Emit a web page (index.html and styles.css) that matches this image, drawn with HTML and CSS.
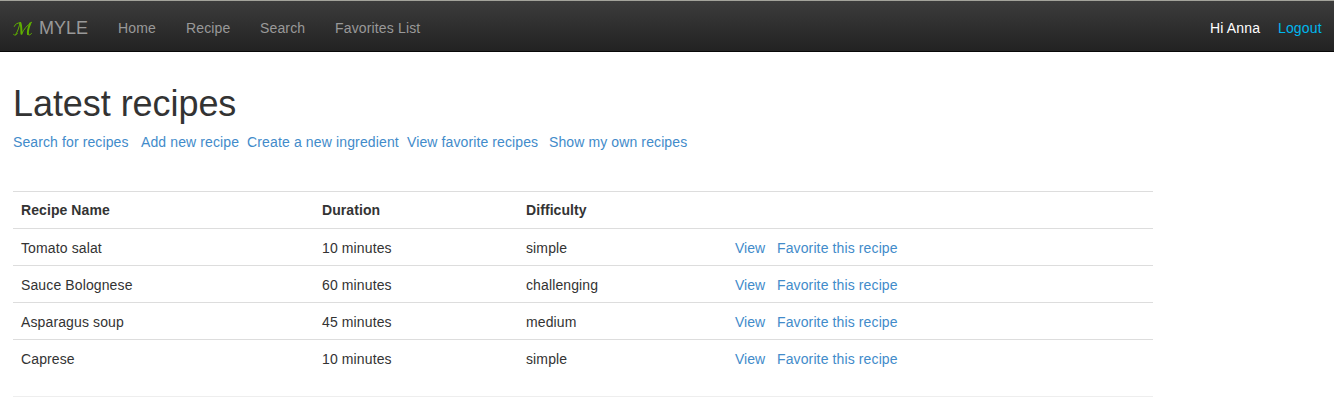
FILE: index.html
```html
<!DOCTYPE html>
<html lang="en">
<head>
<meta charset="utf-8">
<title>Latest recipes</title>
<link rel="stylesheet" href="styles.css">
</head>
<body>
<nav class="navbar">
  <a class="brand"><svg class="logo" viewBox="0 0 22 16" width="22" height="16" aria-hidden="true"><path class="hairline" d="M1.300 5.400C2 3.200 4.200 2 7 1.700M7 2C6 6 5 10 2.700 13.600M.5 13.400C1.800 14.800 3.200 14.200 4.300 12.500M8.600 12.800C11 8.200 14 4.200 18.700 1.200M15 12.800C15 15 17.200 14 18.500 12.500"/><path class="stem" d="M7.400 2C8.500 5 8.300 9 8.500 12.800M17.300 2.400C15.700 6 14.500 10 15 13"/></svg><span>MYLE</span></a>
  <a class="nav-link home">Home</a><a class="nav-link recipe">Recipe</a><a class="nav-link find">Search</a><a class="nav-link">Favorites List</a>
  <div class="user"><span class="greeting">Hi Anna</span><a class="logout">Logout</a></div>
</nav>
<main class="content">
  <h1>Latest recipes</h1>
  <div class="actions"><a class="search">Search for recipes</a><a class="add">Add new recipe</a><a class="create">Create a new ingredient</a><a class="favorites">View favorite recipes</a><a>Show my own recipes</a></div>
  <table class="recipes">
    <colgroup><col class="name"><col class="duration"><col class="difficulty"><col></colgroup>
    <thead><tr><th>Recipe Name</th><th>Duration</th><th>Difficulty</th><th></th></tr></thead>
    <tbody>
      <tr><td>Tomato salat</td><td>10 minutes</td><td>simple</td><td><a class="view">View</a><a class="favorite">Favorite this recipe</a></td></tr>
      <tr><td>Sauce Bolognese</td><td>60 minutes</td><td>challenging</td><td><a class="view">View</a><a class="favorite">Favorite this recipe</a></td></tr>
      <tr><td>Asparagus soup</td><td>45 minutes</td><td>medium</td><td><a class="view">View</a><a class="favorite">Favorite this recipe</a></td></tr>
      <tr><td>Caprese</td><td>10 minutes</td><td>simple</td><td><a class="view">View</a><a class="favorite">Favorite this recipe</a></td></tr>
    </tbody>
  </table>
  <hr class="rule">
</main>
</body>
</html>
```
FILE: styles.css
```css
* { box-sizing: border-box; }
body { margin: 0; font: 14px/20px "Liberation Sans", Arial, sans-serif; color: #333; background: #fff; overflow: hidden; }
.navbar { display: flex; align-items: center; height: 52px; padding: 3px 12px 0 13px; border-top: 1px solid #a3a39b; border-bottom: 1px solid #080808; background: linear-gradient(#3c3c3c, #222); color: #999; }
.brand { display: flex; align-items: center; width: 90px; font-size: 18px; }
.logo { margin: 2px 4px 0 0; fill: none; stroke: #60b000; stroke-linecap: round; stroke-linejoin: round; }
.hairline { stroke-width: 1; }
.stem { stroke-width: 2; }
.nav-link { padding-left: 15px; letter-spacing: .15px; }
.home { width: 68px; }
.recipe { width: 74px; }
.find { width: 75px; }
.user { display: flex; margin-left: auto; color: #fff; }
.greeting { width: 68px; letter-spacing: .15px; }
.logout { width: 44px; color: #00b7ee; letter-spacing: .15px; }
.content { width: 1153px; padding-left: 13px; }
h1 { margin: 32px 0 8px; font-size: 36px; line-height: 40px; font-weight: 400; letter-spacing: -.06px; }
.actions { display: flex; color: #428bca; letter-spacing: .11px; }
.actions a { white-space: nowrap; }
.search { width: 128px; }
.add { width: 106px; }
.create { width: 160px; letter-spacing: .14px; }
.favorites { width: 142px; }
.recipes { width: 1140px; margin-top: 39px; border-collapse: collapse; table-layout: fixed; }
.name { width: 301px; }
.duration { width: 204px; }
.difficulty { width: 209px; }
th, td { height: 37px; padding: 8px; border-top: 1px solid #ddd; text-align: left; }
th { letter-spacing: .08px; }
td { padding: 9px 8px 7px; letter-spacing: .12px; }
td a { color: #428bca; }
.view { display: inline-block; width: 42px; letter-spacing: 0; }
.rule { margin: 19px 0 0; border: 0; border-top: 1px solid #eee; }
```
